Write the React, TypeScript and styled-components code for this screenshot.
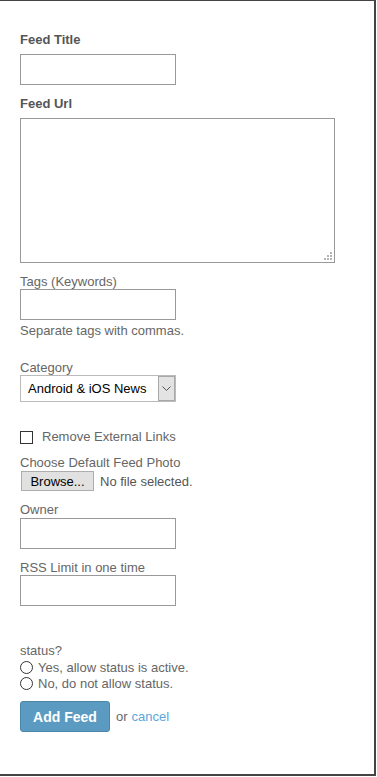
import React from "react";
import styled, { createGlobalStyle } from "styled-components";

const Global = createGlobalStyle`
  html, body { margin: 0; padding: 0; background: #fff; }
  body { font-family: "Liberation Sans", Arial, sans-serif; }
  * { box-sizing: border-box; }
`;

const Frame = styled.div`
  width: 376px;
  height: 776px;
  border-top: 1px solid #444;
  border-right: 2px solid #444;
  border-bottom: 2px solid #444;
  padding: 31px 0 0 20px;
  display: flex;
  flex-direction: column;
  align-items: flex-start;
  font-size: 13px;
  line-height: 15px;
  color: #666;
`;

const Label = styled.label<{ $bold?: boolean; $mt?: number; $mb?: number }>`
  display: block;
  font-size: 13px;
  line-height: 15px;
  font-weight: ${(p) => (p.$bold ? 700 : 400)};
  color: ${(p) => (p.$bold ? "#555" : "#666")};
  margin-top: ${(p) => p.$mt ?? 0}px;
  margin-bottom: ${(p) => p.$mb ?? 0}px;
`;

const TextInput = styled.input`
  display: block;
  width: 156px;
  height: 31px;
  border: 1px solid #999;
  background: #fff;
  padding: 0 4px;
  font: 13px "Liberation Sans", Arial, sans-serif;
  outline: none;
  margin: 0;
`;

const AreaWrap = styled.div`
  position: relative;
  width: 315px;
  height: 145px;
`;

const Area = styled.textarea`
  display: block;
  width: 100%;
  height: 100%;
  border: 1px solid #999;
  resize: none;
  margin: 0;
  outline: none;
  font: 13px "Liberation Sans", Arial, sans-serif;
`;

const Grip = styled.svg`
  position: absolute;
  right: 3px;
  bottom: 3px;
  width: 8px;
  height: 8px;
`;

const Hint = styled.div<{ $mt?: number }>`
  margin-top: ${(p) => p.$mt ?? 0}px;
  color: #666;
`;

const SelectBox = styled.div`
  display: flex;
  width: 156px;
  height: 27px;
  border: 1px solid #bbb;
  background: #fff;
`;

const SelectValue = styled.div`
  flex: 1;
  padding-left: 7px;
  display: flex;
  align-items: center;
  color: #000;
  font-size: 13px;
`;

const SelectArrow = styled.div`
  width: 17px;
  background: #e3e3e3;
  border: 1px solid #a8a8a8;
  margin: 0;
  display: flex;
  align-items: center;
  justify-content: center;
`;

const CheckRow = styled.div<{ $mt?: number }>`
  display: flex;
  align-items: center;
  margin-top: ${(p) => p.$mt ?? 0}px;
  height: 15px;
`;

const CheckBox = styled.span`
  width: 13px;
  height: 13px;
  border: 1px solid #333;
  background: #fff;
  margin-right: 9px;
  margin-top: 2px;
`;

const FileRow = styled.div`
  display: flex;
  align-items: center;
  margin-top: 1px;
  padding-left: 1px;
`;

const BrowseButton = styled.button`
  width: 73px;
  height: 20px;
  border: 1px solid #adadad;
  background: #e1e1e1;
  color: #000;
  font: 13px "Liberation Sans", Arial, sans-serif;
  padding: 0;
  margin: 0 6px 0 0;
`;

const FileText = styled.span`
  color: #555;
`;

const RadioRow = styled.label<{ $mt?: number }>`
  display: flex;
  align-items: center;
  height: 16px;
  margin-top: ${(p) => p.$mt ?? 0}px;
  color: #666;
`;

const RadioDot = styled.span`
  width: 13px;
  height: 13px;
  border: 1px solid #333;
  border-radius: 50%;
  background: #fff;
  margin-right: 5px;
`;

const Actions = styled.div`
  display: flex;
  align-items: center;
  margin-top: 10px;
`;

const SubmitButton = styled.button`
  width: 90px;
  height: 31px;
  background: #5b9bc1;
  border: 1px solid #4a86a8;
  border-radius: 3px;
  color: #fff;
  font: bold 14px "Liberation Sans", Arial, sans-serif;
  padding: 0;
  margin: 0 6px 0 0;
`;

const OrText = styled.span`
  color: #666;
  font-size: 13px;
`;

const CancelLink = styled.a`
  color: #5aa6dc;
  text-decoration: none;
  margin-left: 4px;
  font-size: 13px;
`;

export default function App() {
  return (
    <>
      <Global />
      <Frame>
        <Label $bold $mb={7}>Feed Title</Label>
        <TextInput type="text" />
        <Label $bold $mt={11} $mb={7}>Feed Url</Label>
        <AreaWrap>
          <Area />
          <Grip viewBox="0 0 8 8">
            <g fill="#b5b5b5">
              <rect x="6" y="0" width="2" height="2" />
              <rect x="3" y="3" width="2" height="2" />
              <rect x="6" y="3" width="2" height="2" />
              <rect x="0" y="6" width="2" height="2" />
              <rect x="3" y="6" width="2" height="2" />
              <rect x="6" y="6" width="2" height="2" />
            </g>
          </Grip>
        </AreaWrap>
        <Label $mt={11} $mb={0}>Tags (Keywords)</Label>
        <TextInput type="text" />
        <Hint $mt={3}>Separate tags with commas.</Hint>
        <Label $mt={22} $mb={0}>Category</Label>
        <SelectBox>
          <SelectValue>Android &amp; iOS News</SelectValue>
          <SelectArrow>
            <svg width="9" height="6" viewBox="0 0 9 6">
              <path d="M0.5 0.5 L4.5 4.5 L8.5 0.5" fill="none" stroke="#555" strokeWidth="1" />
            </svg>
          </SelectArrow>
        </SelectBox>
        <CheckRow $mt={27}>
          <CheckBox />
          <span>Remove External Links</span>
        </CheckRow>
        <Label $mt={11}>Choose Default Feed Photo</Label>
        <FileRow>
          <BrowseButton type="button">Browse...</BrowseButton>
          <FileText>No file selected.</FileText>
        </FileRow>
        <Label $mt={11} $mb={1}>Owner</Label>
        <TextInput type="text" />
        <Label $mt={11}>RSS Limit in one time</Label>
        <TextInput type="text" />
        <Label $mt={37}>status?</Label>
        <RadioRow $mt={1}>
          <RadioDot />
          Yes, allow status is active.
        </RadioRow>
        <RadioRow>
          <RadioDot />
          No, do not allow status.
        </RadioRow>
        <Actions>
          <SubmitButton type="button">Add Feed</SubmitButton>
          <OrText>or</OrText>
          <CancelLink href="#">cancel</CancelLink>
        </Actions>
      </Frame>
    </>
  );
}
